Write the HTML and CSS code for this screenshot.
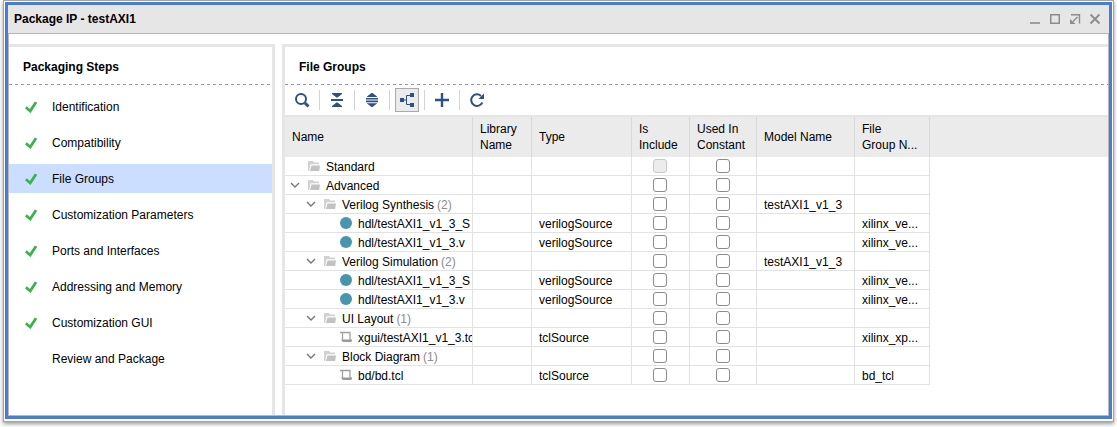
FILE: index.html
```html
<!DOCTYPE html>
<html lang="en">
<head>
<meta charset="utf-8">
<title>Package IP - testAXI1</title>
<link rel="stylesheet" href="styles.css">
</head>
<body>
<svg class="defs" aria-hidden="true">
  <symbol id="check" viewBox="0 0 12 12"><path d="M.8 6.200l4.400 3.800L11 1.200" fill="none" stroke="#3db14b" stroke-width="2.800"/></symbol>
  <symbol id="folder" viewBox="0 0 12 10"><path d="M0 10V0h5l1 1.500h5v1.700H2.600L1.200 10z" fill="#d2d2d2"/><path d="M3.500 4.400H12L11.200 10H2z" fill="#c2c2c2"/></symbol>
  <symbol id="chevron" viewBox="0 0 10 6"><path d="M1 1l4 4 4-4" fill="none" stroke="#777" stroke-width="1.4"/></symbol>
  <symbol id="dot" viewBox="0 0 12 12"><circle cx="6" cy="6" r="6" fill="#4796ae"/></symbol>
  <symbol id="script" viewBox="0 0 12 12"><path d="M0 1.500h10V9M2.500 1.500V9" fill="none" stroke="#a0a0a0" stroke-width="1.300"/><path d="M1.500 8.500H12v1.300L11 11H3L1.500 9.800z" fill="#999"/></symbol>
</svg>
<div class="window">
  <header class="titlebar">
    <h1 class="title">Package IP - testAXI1</h1>
    <div class="controls">
      <button class="control" aria-label="Minimize"><svg width="12" height="12" viewBox="0 0 12 12"><path d="M1 10h10" stroke="#8c8c8c" stroke-width="1.600"/></svg></button>
      <button class="control" aria-label="Maximize"><svg width="12" height="12" viewBox="0 0 12 12"><path d="M1.750 1.750h8.500v8.500h-8.500z" fill="none" stroke="#8c8c8c" stroke-width="1.500"/></svg></button>
      <button class="control" aria-label="Float"><svg width="12" height="12" viewBox="0 0 12 12"><path d="M2 1.750h8.500V10.500M8.500 4L4 8.500" fill="none" stroke="#8c8c8c" stroke-width="1.400"/><path d="M1 6v5h5.500z" fill="#8c8c8c"/></svg></button>
      <button class="control" aria-label="Close"><svg width="12" height="12" viewBox="0 0 12 12"><path d="M1.500 1.500l9 9M10.500 1.500l-9 9" stroke="#8c8c8c" stroke-width="1.800"/></svg></button>
    </div>
  </header>
  <main class="content">
    <nav class="panel steps">
      <h2 class="heading">Packaging Steps</h2>
      <ul class="step-list">
        <li><button class="step"><svg class="mark"><use href="#check"/></svg>Identification</button></li>
        <li><button class="step"><svg class="mark"><use href="#check"/></svg>Compatibility</button></li>
        <li><button class="step selected" aria-current="step"><svg class="mark"><use href="#check"/></svg>File Groups</button></li>
        <li><button class="step"><svg class="mark"><use href="#check"/></svg>Customization Parameters</button></li>
        <li><button class="step"><svg class="mark"><use href="#check"/></svg>Ports and Interfaces</button></li>
        <li><button class="step"><svg class="mark"><use href="#check"/></svg>Addressing and Memory</button></li>
        <li><button class="step"><svg class="mark"><use href="#check"/></svg>Customization GUI</button></li>
        <li><button class="step"><svg class="mark"></svg>Review and Package</button></li>
      </ul>
    </nav>
    <section class="panel groups">
      <h2 class="heading">File Groups</h2>
      <div class="toolbar">
        <button class="tool" aria-label="Search"><svg width="16" height="16" viewBox="0 0 16 16"><circle cx="7" cy="7" r="5" fill="none" stroke="#2f4f87" stroke-width="2"/><path d="M11 11l3.500 3.500" stroke="#2f4f87" stroke-width="3"/></svg></button>
        <button class="tool" aria-label="Collapse all"><svg width="16" height="16" viewBox="0 0 16 16"><path d="M3 1h10v1L8.500 5.500h-1L3 2zM2 7h12v2H2zM7.500 10.500h1L13 14v1H3v-1z" fill="#2f4f87"/></svg></button>
        <button class="tool" aria-label="Expand all"><svg width="16" height="16" viewBox="0 0 16 16"><path d="M7.500 1h1L13 4.500V5H3v-.5zM2 6h12v1.600H2zM2 8.600h12v1.600H2zM3 11.200h10v.3L8.500 15h-1L3 11.500z" fill="#2f4f87"/></svg></button>
        <button class="tool pressed" aria-label="Group by type" aria-pressed="true"><svg width="16" height="16" viewBox="0 0 16 16"><path d="M1 6h4v4H1zM11 1h4v4h-4zM11 11h4v4h-4z" fill="#2f4f87"/><path d="M5 8h2.500M11 3.500H7.500v9H11" fill="none" stroke="#2f4f87"/></svg></button>
        <button class="tool" aria-label="Add"><svg width="16" height="16" viewBox="0 0 16 16"><path d="M8 1v14M1 8h14" stroke="#2f4f87" stroke-width="2.400"/></svg></button>
        <button class="tool" aria-label="Refresh"><svg width="16" height="16" viewBox="0 0 16 16"><path d="M13.300 10.500A5.800 5.800 0 1 1 12 3.900" fill="none" stroke="#2f4f87" stroke-width="2"/><path d="M15 1.500V7H9.500z" fill="#2f4f87"/></svg></button>
      </div>
      <div class="table-area">
      <table class="grid">
        <colgroup><col class="c-name"><col class="c-lib"><col class="c-type"><col class="c-inc"><col class="c-used"><col class="c-model"><col class="c-file"><col></colgroup>
        <thead>
          <tr><th>Name</th><th>Library<br>Name</th><th>Type</th><th>Is<br>Include</th><th>Used In<br>Constant</th><th>Model Name</th><th>File<br>Group N...</th><td class="rest"></td></tr>
        </thead>
        <tbody>
          <tr><td><div class="node l0"><svg class="chev"></svg><svg class="folder"><use href="#folder"/></svg>Standard</div></td><td></td><td></td><td class="tick inc"><input type="checkbox" aria-label="Include Standard" disabled></td><td class="tick"><input type="checkbox" aria-label="Constant Standard"></td><td></td><td></td></tr>
          <tr><td><div class="node l0"><svg class="chev"><use href="#chevron"/></svg><svg class="folder"><use href="#folder"/></svg>Advanced</div></td><td></td><td></td><td class="tick inc"><input type="checkbox" aria-label="Include Advanced"></td><td class="tick"><input type="checkbox" aria-label="Constant Advanced"></td><td></td><td></td></tr>
          <tr><td><div class="node l1"><svg class="chev"><use href="#chevron"/></svg><svg class="folder"><use href="#folder"/></svg>Verilog Synthesis<span class="count">(2)</span></div></td><td></td><td></td><td class="tick inc"><input type="checkbox" aria-label="Include Verilog Synthesis"></td><td class="tick"><input type="checkbox" aria-label="Constant Verilog Synthesis"></td><td>testAXI1_v1_3</td><td></td></tr>
          <tr><td><div class="node l2"><svg class="leaf"><use href="#dot"/></svg>hdl/testAXI1_v1_3_S</div></td><td></td><td>verilogSource</td><td class="tick inc"><input type="checkbox" aria-label="Include file"></td><td class="tick"><input type="checkbox" aria-label="Constant file"></td><td></td><td>xilinx_ve...</td></tr>
          <tr><td><div class="node l2"><svg class="leaf"><use href="#dot"/></svg>hdl/testAXI1_v1_3.v</div></td><td></td><td>verilogSource</td><td class="tick inc"><input type="checkbox" aria-label="Include file"></td><td class="tick"><input type="checkbox" aria-label="Constant file"></td><td></td><td>xilinx_ve...</td></tr>
          <tr><td><div class="node l1"><svg class="chev"><use href="#chevron"/></svg><svg class="folder"><use href="#folder"/></svg>Verilog Simulation<span class="count">(2)</span></div></td><td></td><td></td><td class="tick inc"><input type="checkbox" aria-label="Include Verilog Simulation"></td><td class="tick"><input type="checkbox" aria-label="Constant Verilog Simulation"></td><td>testAXI1_v1_3</td><td></td></tr>
          <tr><td><div class="node l2"><svg class="leaf"><use href="#dot"/></svg>hdl/testAXI1_v1_3_S</div></td><td></td><td>verilogSource</td><td class="tick inc"><input type="checkbox" aria-label="Include file"></td><td class="tick"><input type="checkbox" aria-label="Constant file"></td><td></td><td>xilinx_ve...</td></tr>
          <tr><td><div class="node l2"><svg class="leaf"><use href="#dot"/></svg>hdl/testAXI1_v1_3.v</div></td><td></td><td>verilogSource</td><td class="tick inc"><input type="checkbox" aria-label="Include file"></td><td class="tick"><input type="checkbox" aria-label="Constant file"></td><td></td><td>xilinx_ve...</td></tr>
          <tr><td><div class="node l1"><svg class="chev"><use href="#chevron"/></svg><svg class="folder"><use href="#folder"/></svg>UI Layout<span class="count">(1)</span></div></td><td></td><td></td><td class="tick inc"><input type="checkbox" aria-label="Include UI Layout"></td><td class="tick"><input type="checkbox" aria-label="Constant UI Layout"></td><td></td><td></td></tr>
          <tr><td><div class="node l2"><svg class="leaf"><use href="#script"/></svg>xgui/testAXI1_v1_3.tcl</div></td><td></td><td>tclSource</td><td class="tick inc"><input type="checkbox" aria-label="Include file"></td><td class="tick"><input type="checkbox" aria-label="Constant file"></td><td></td><td>xilinx_xp...</td></tr>
          <tr><td><div class="node l1"><svg class="chev"><use href="#chevron"/></svg><svg class="folder"><use href="#folder"/></svg>Block Diagram<span class="count">(1)</span></div></td><td></td><td></td><td class="tick inc"><input type="checkbox" aria-label="Include Block Diagram"></td><td class="tick"><input type="checkbox" aria-label="Constant Block Diagram"></td><td></td><td></td></tr>
          <tr><td><div class="node l2"><svg class="leaf"><use href="#script"/></svg>bd/bd.tcl</div></td><td></td><td>tclSource</td><td class="tick inc"><input type="checkbox" aria-label="Include file"></td><td class="tick"><input type="checkbox" aria-label="Constant file"></td><td></td><td>bd_tcl</td></tr>
        </tbody>
      </table>
      </div>
    </section>
  </main>
</div>
</body>
</html>
```
FILE: styles.css
```css
* { box-sizing: border-box; }
body {
  margin: 0;
  padding: 1px 4px 6px;
  height: 100vh;
  background: #fff;
  color: #000;
  font: 12px/16px "Liberation Sans", Arial, sans-serif;
}
button { font: inherit; color: inherit; border: 0; background: none; padding: 0; }
h1, h2 { margin: 0; font-size: 12px; line-height: 16px; font-weight: bold; }
svg { display: block; flex: none; }
.defs { position: absolute; width: 0; height: 0; }
.window {
  display: flex;
  flex-direction: column;
  height: 100%;
  padding: 3px;
  border: 1px solid #fff;
  border-bottom-width: 2px;
  background: #4a7ccf;
  box-shadow: 0 0 0 1px #a4a4a4, 0 2px 4px 1px #999;
}
.titlebar {
  display: flex;
  justify-content: space-between;
  align-items: center;
  height: 29px;
  padding: 0 8px 0 6px;
  background: #e6e6e6;
  border-bottom: 1px solid #b4b4b4;
}
.controls { display: flex; gap: 8px; }
.control { width: 12px; height: 12px; }
.content {
  display: flex;
  flex: 1;
  gap: 7px;
  min-height: 0;
  padding-top: 10px;
  background: #fff;
  border: 1px solid #b8b8b8;
  border-top: 0;
}
.panel { border: 0 solid #e6e6e6; border-top-width: 3px; }
.steps { flex: 0 0 266px; border-right-width: 3px; }
.groups { flex: 1; min-width: 0; border-left-width: 3px; }
.heading {
  height: 38px;
  padding: 12px 14px 0;
  background: repeating-linear-gradient(90deg, #999 0 3px, #fff 3px 6px) bottom / 100% 1px no-repeat;
}
.step-list {
  display: flex;
  flex-direction: column;
  gap: 7px;
  margin: 0;
  padding: 7px 0 0;
  list-style: none;
}
.step {
  display: flex;
  align-items: center;
  gap: 15px;
  width: 100%;
  height: 29px;
  padding: 0 16px;
  text-align: left;
}
.selected { background: #cbdeff; }
.mark { width: 12px; height: 12px; }
.toolbar { display: flex; align-items: center; height: 30px; padding-left: 5px; }
.tool {
  position: relative;
  display: flex;
  align-items: center;
  justify-content: center;
  width: 24px;
  height: 24px;
  margin-right: 11px;
}
.tool:not(:last-child)::after {
  content: "";
  position: absolute;
  right: -6px;
  top: 2px;
  width: 1px;
  height: 20px;
  background: #d4d4d4;
}
.pressed { background: #ebebeb; outline: 1px solid #aaa; outline-offset: -1px; }
.table-area { border-top: 2px solid #e5e5e5; overflow: hidden; }
.grid { width: 100%; table-layout: fixed; border-spacing: 0; }
.c-name { width: 188px; }
.c-lib { width: 59px; }
.c-type { width: 100px; }
.c-inc { width: 58px; }
.c-used { width: 67px; }
.c-model { width: 98px; }
.c-file { width: 75px; }
.grid th {
  height: 40px;
  padding: 0 0 0 7px;
  background: #ebebeb;
  border-right: 1px solid #d9d9d9;
  font-weight: normal;
  text-align: left;
}
.grid td {
  height: 19px;
  padding: 2px 0 0 7px;
  border-right: 1px solid #e2e2e2;
  border-bottom: 1px solid #e2e2e2;
  overflow: hidden;
  white-space: nowrap;
}
.grid .rest { padding: 0; background: #ebebeb; border: 0; }
.grid td:first-child { padding: 0; }
.grid .tick { padding: 0; }
.grid .inc { padding-right: 2px; }
.tick input {
  appearance: none;
  display: block;
  width: 14px;
  height: 14px;
  margin: 0 auto;
  border: 1px solid #8c8c8c;
  border-radius: 3px;
  background: #fff;
}
.tick input:disabled { border-color: #c8c8c8; background: #ececec; }
.node { display: flex; align-items: flex-end; height: 18px; overflow: hidden; }
.l0 { padding-left: 5px; }
.l1 { padding-left: 21px; }
.l2 { padding-left: 55px; }
.chev { width: 10px; height: 6px; margin: 0 8px 6px 0; }
.folder { width: 12px; height: 10px; margin: 0 6px 4px 0; }
.leaf { width: 12px; height: 12px; margin: 0 6px 3px 0; }
.count { margin-left: 3px; color: #8c8c8c; }
```
